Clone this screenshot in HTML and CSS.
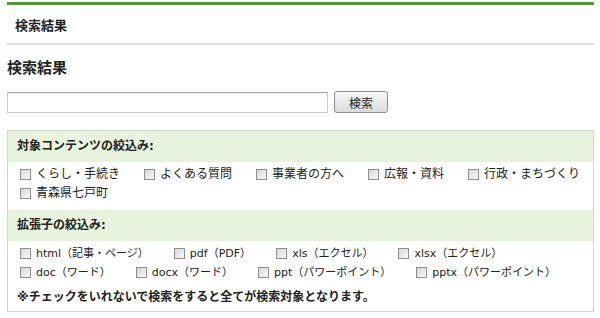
FILE: index.html
```html
<!DOCTYPE html>
<html lang="ja">

<head>
    <meta charset="UTF-8">
    <meta name="viewport" content="width=device-width, initial-scale=1.0">
    <title>検索結果</title>
    <link rel="stylesheet" href="styles.css">
</head>

<body>

    <div class="page">
        <div class="page-title">
            <h1>検索結果</h1>
        </div>

        <h2 class="heading">検索結果</h2>

        <form class="search-form">
            <input class="search-input" type="text" name="q">
            <button class="search-btn" type="button">検索</button>
        </form>

        <div class="filter-box">
            <div class="filter-head">対象コンテンツの絞込み:</div>
            <div class="filter-body">
                <label class="check"><input type="checkbox">くらし・手続き</label>
                <label class="check"><input type="checkbox">よくある質問</label>
                <label class="check"><input type="checkbox">事業者の方へ</label>
                <label class="check"><input type="checkbox">広報・資料</label>
                <label class="check"><input type="checkbox">行政・まちづくり</label>
                <label class="check"><input type="checkbox">青森県七戸町</label>
            </div>

            <div class="filter-head">拡張子の絞込み:</div>
            <div class="filter-body ext">
                <label class="check"><input type="checkbox">html（記事・ページ）</label>
                <label class="check"><input type="checkbox">pdf（PDF）</label>
                <label class="check"><input type="checkbox">xls（エクセル）</label>
                <label class="check"><input type="checkbox">xlsx（エクセル）</label>
                <label class="check"><input type="checkbox">doc（ワード）</label>
                <label class="check"><input type="checkbox">docx（ワード）</label>
                <label class="check"><input type="checkbox">ppt（パワーポイント）</label>
                <label class="check"><input type="checkbox">pptx（パワーポイント）</label>
            </div>
            <p class="note">※チェックをいれないで検索をすると全てが検索対象となります。</p>
        </div>
    </div>

</body>

</html>
```

FILE: styles.css
```css
* {
    box-sizing: border-box;
    padding: 0;
    margin: 0;
}

body {
    font-family: "DejaVu Sans", "Noto Sans CJK JP", sans-serif;
    font-size: 12px;
    color: #222;
    background: #fff;
}

.page {
    width: 587px;
    margin-left: 7px;
    padding-top: 2px;
}

/* ページタイトル */
.page-title {
    border-top: 3px solid #4d9f1f;
    border-bottom: 2px solid #dedede;
    height: 43px;
    padding-left: 8px;
    display: flex;
    align-items: center;
}

.page-title h1 {
    font-size: 13px;
    font-weight: bold;
}

.heading {
    font-size: 15px;
    font-weight: bold;
    margin-top: 12px;
    line-height: 22px;
}

/* 検索フォーム */
.search-form {
    display: flex;
    align-items: center;
    margin-top: 12px;
}

.search-input {
    width: 321px;
    height: 21px;
    border: 1px solid #c8c8c8;
    border-top-color: #aaa;
    box-shadow: inset 0 1px 1px #eee;
}

.search-btn {
    margin-left: 6px;
    width: 54px;
    height: 22px;
    border: 1px solid #8e8e8e;
    border-radius: 3px;
    background: linear-gradient(#f7f7f7, #dcdcdc);
    font-family: "DejaVu Sans", "Noto Sans CJK JP", sans-serif;
    font-size: 12px;
    color: #222;
}

/* 絞込み */
.filter-box {
    margin-top: 17px;
    border: 1px solid #d4d4d4;
}

.filter-head {
    background: #e7f3dd;
    font-weight: bold;
    height: 31px;
    line-height: 31px;
    padding-left: 9px;
}

.filter-body {
    display: flex;
    flex-wrap: wrap;
    column-gap: 24px;
    padding: 3px 12px 7px;
    line-height: 19px;
}

.filter-body.ext {
    font-size: 11px;
    column-gap: 25px;
}

.check {
    display: flex;
    align-items: center;
}

.check input {
    appearance: none;
    width: 11px;
    height: 11px;
    margin-right: 5px;
    border: 1px solid #8f8f8f;
    background: linear-gradient(135deg, #d6d6d6, #fafafa);
}

.note {
    font-weight: bold;
    line-height: 19px;
    padding: 0 9px 4px;
    margin-top: -1px;
}
```
